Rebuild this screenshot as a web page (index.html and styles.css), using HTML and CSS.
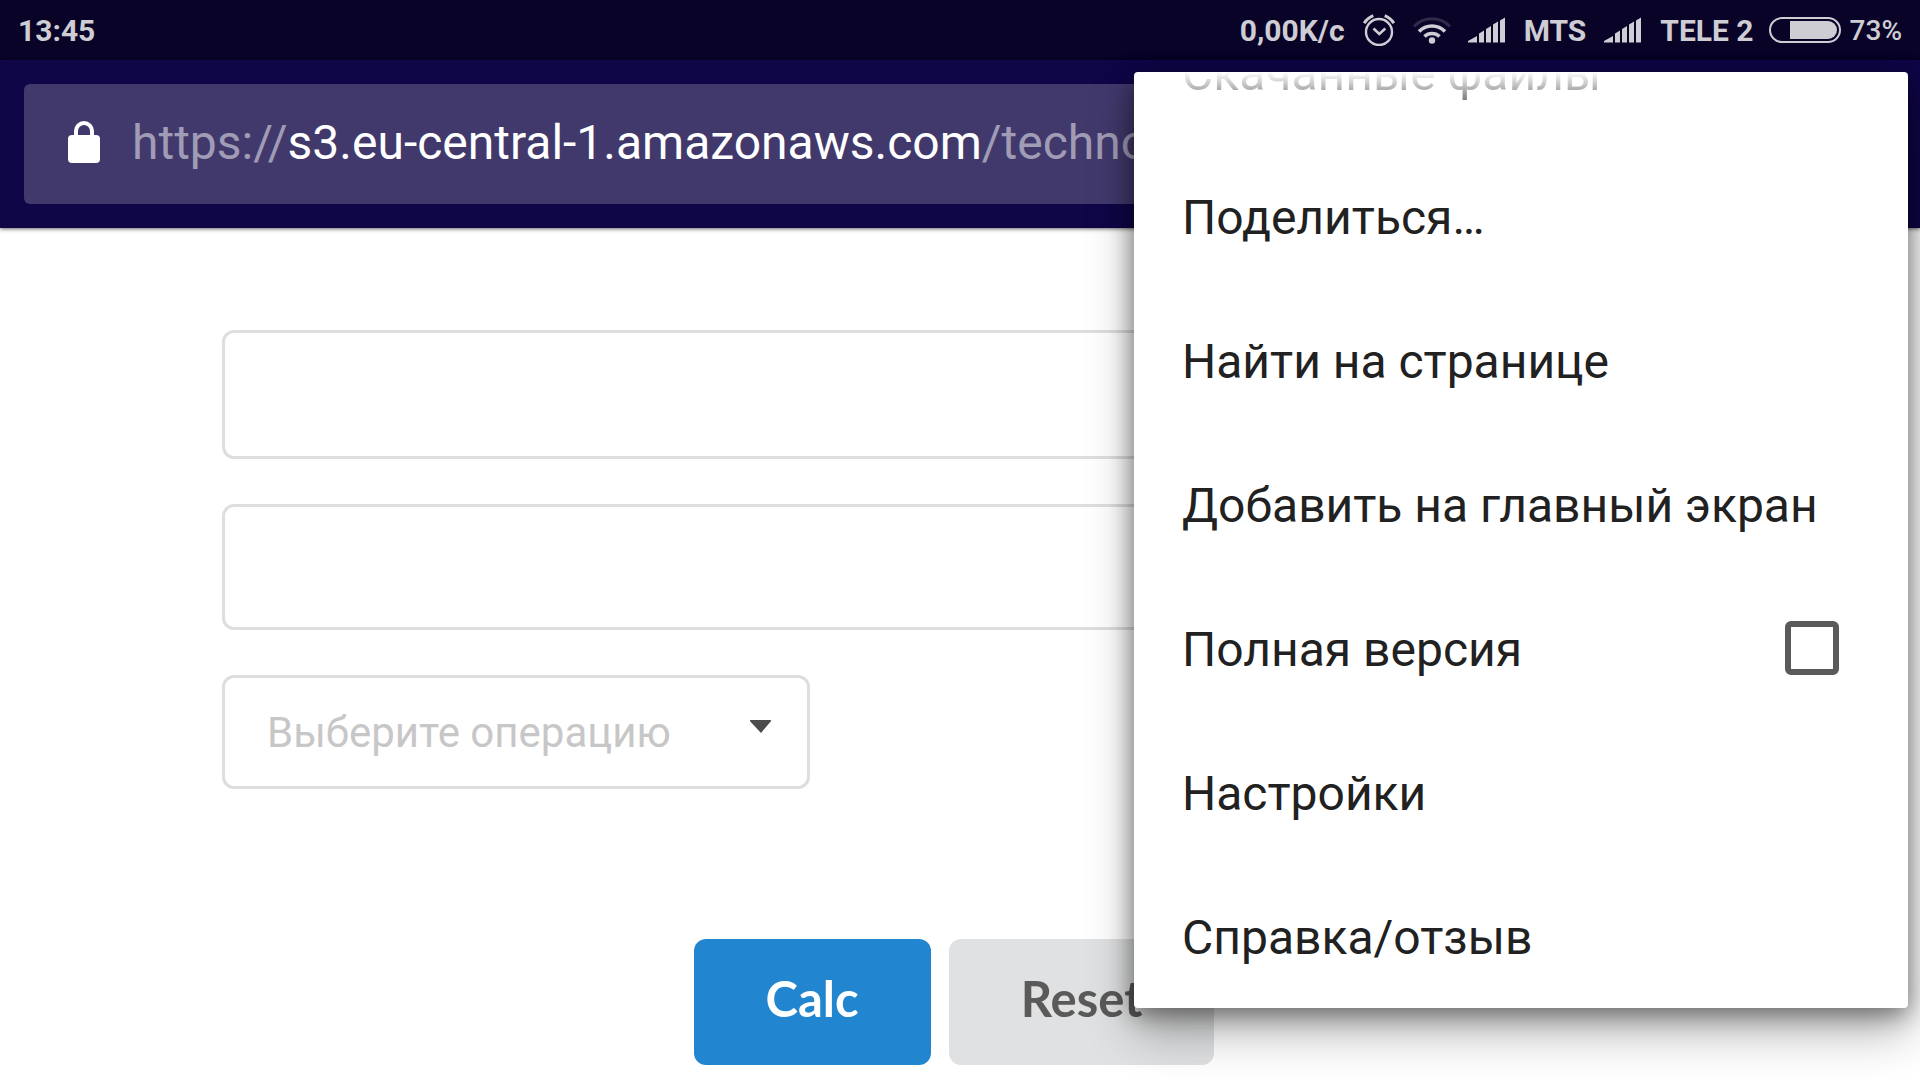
FILE: index.html
```
<!DOCTYPE html>
<html lang="ru">
<head>
<meta charset="utf-8">
<meta name="viewport" content="width=device-width, initial-scale=1">
<title>Calc</title>
<link rel="stylesheet" href="styles.css">
</head>
<body>
<div class="screen">
  <header class="status">
    <time class="status-time">13:45</time>
    <div class="status-info">
      <span class="speed">0,00K/c</span>
      <svg class="alarm" width="32" height="32" viewBox="0 0 32 32" fill="none" stroke="currentColor" aria-hidden="true">
        <circle cx="16" cy="18" r="13" stroke-width="2.4"/>
        <path d="M10.500 14.500l5.800 5.500 6-5.500" stroke-width="2.600"/>
        <path d="M1.200 9.200Q4.500 4 10.300 1.700M30.800 9.200Q27.500 4 21.700 1.700" stroke-width="3"/>
      </svg>
      <svg class="wifi" width="38" height="28" viewBox="0 0 38 28" fill="none" stroke="currentColor" aria-hidden="true">
        <path d="M1 10.500a25 25 0 0 1 36 0" stroke-width="3" opacity=".2"/>
        <path d="M6 15.500a18 18 0 0 1 26 0" stroke-width="3.600"/>
        <path d="M11.500 20.500a11 11 0 0 1 15 0" stroke-width="3.600"/>
        <circle cx="19" cy="24.500" r="3.200" fill="currentColor" stroke="none"/>
      </svg>
      <svg class="signal" width="38" height="26" viewBox="0 0 38 26" fill="currentColor" aria-hidden="true">
        <path d="M0 25.500v-1.500L9 19v6.500zM11 25.500V16.500l5-3v12zM18 25.500V12l5-3v16.500zM25 25.500V7.500l5-3v21zM32 25.500V3.500L37 .5v25z"/>
      </svg>
      <span class="carrier">MTS</span>
      <svg class="signal" width="38" height="26" viewBox="0 0 38 26" fill="currentColor" aria-hidden="true">
        <path d="M0 25.500v-1.500L9 19v6.500zM11 25.500V16.500l5-3v12zM18 25.500V12l5-3v16.500zM25 25.500V7.500l5-3v21zM32 25.500V3.500L37 .5v25z"/>
      </svg>
      <span class="carrier carrier-last">TELE 2</span>
      <svg class="battery" width="72" height="26" viewBox="0 0 72 26" aria-hidden="true">
        <rect x="1" y="1" width="70" height="24" rx="12" fill="none" stroke="currentColor" stroke-width="2"/>
        <path d="M21 4h38a9 9 0 0 1 0 18H21z" fill="currentColor"/>
      </svg>
      <span class="percent">73%</span>
    </div>
  </header>
  <div class="toolbar">
    <div class="address">
      <svg class="lock" width="32" height="42" viewBox="0 0 32 42" aria-hidden="true">
        <rect y="14" width="32" height="28" rx="4" fill="#fff"/>
        <path d="M8 15v-5a8 8 0 0 1 16 0v5" fill="none" stroke="#fff" stroke-width="4"/>
      </svg>
      <span class="url">https://<span class="host">s3.eu-central-1.amazonaws.com</span>/techno</span>
    </div>
  </div>
  <main class="page">
    <form class="form">
      <input class="field field-first" type="text" aria-label="A">
      <input class="field" type="text" aria-label="B">
      <div class="select-box">
        <select class="select" aria-label="Выберите операцию">
          <option>Выберите операцию</option>
        </select>
        <svg class="caret" width="22" height="14" viewBox="0 0 22 14" aria-hidden="true"><path d="M1 0h19q2 0 .7 1.600L11 13 .3 1.600Q-1 0 1 0z" fill="#4c4c4c"/></svg>
      </div>
      <div class="actions">
        <button class="button primary" type="button">Calc</button>
        <button class="button" type="button">Reset</button>
      </div>
    </form>
  </main>
  <nav class="menu">
    <div class="menu-list">
      <a class="item item-cut" href="#">Скачанные файлы</a>
      <a class="item" href="#">Поделиться…</a>
      <a class="item" href="#">Найти на странице</a>
      <a class="item" href="#">Добавить на главный экран</a>
      <label class="item"><span>Полная версия</span><input class="check" type="checkbox"></label>
      <a class="item" href="#">Настройки</a>
      <a class="item" href="#">Справка/отзыв</a>
    </div>
  </nav>
</div>
</body>
</html>
```
FILE: styles.css
```
* { box-sizing: border-box; }

body {
  margin: 0;
  background: #fff;
  font-family: Roboto, "Noto Sans", sans-serif;
}

.screen {
  position: relative;
  min-height: 100vh;
  overflow: hidden;
}

.status {
  display: flex;
  justify-content: space-between;
  align-items: center;
  height: 60px;
  padding: 0 18px;
  background: #080327;
  color: #cecdd4;
  font-size: 30px;
  font-weight: 700;
}

.status-info { display: flex; align-items: center; }
.speed,
.alarm,
.wifi,
.signal,
.carrier { margin-right: 18px; }
.wifi { margin-right: 17px; }
.carrier-last { margin-right: 15px; }
.battery { margin-right: 9px; }
.percent { font-size: 28px; font-weight: 500; }

.toolbar {
  padding: 24px;
  background: #0e0647;
  box-shadow: 0 1px 4px rgba(0, 0, 0, .6);
}

.address {
  display: flex;
  align-items: center;
  gap: 32px;
  height: 120px;
  padding: 0 44px 4px;
  border-radius: 6px;
  background: #41396c;
}

.lock { flex: none; }
.url { color: #a09cb5; font-size: 48px; white-space: nowrap; }
.host { color: #fff; }

.page { padding: 102px 222px 12px; }
.form { display: flex; flex-direction: column; }

.field,
.select {
  width: 100%;
  border: 3px solid #dedede;
  border-radius: 12px;
  background: #fff;
  font: 42px Roboto, "Noto Sans", sans-serif;
}

.field { height: 126px; margin-bottom: 45px; padding: 0 42px; }
.field-first { height: 129px; }

.select-box { position: relative; width: 588px; }

.select {
  display: block;
  height: 114px;
  padding: 0 42px;
  appearance: none;
  color: #c7c7c7;
}

.caret { position: absolute; right: 38px; top: 45px; }

.actions {
  display: flex;
  justify-content: center;
  gap: 18px;
  margin-top: 150px;
  padding-right: 12px;
}

.button {
  height: 126px;
  padding: 0 72px 8px;
  border: 0;
  border-radius: 12px;
  background: #e0e1e2;
  color: #5a5a5a;
  font: 700 49px Lato, sans-serif;
}

.primary { background: #2185d0; color: #fff; }

.menu {
  position: absolute;
  top: 72px;
  right: 12px;
  width: 774px;
  height: 936px;
  overflow: hidden;
  border-radius: 4px;
  background: #fff;
  box-shadow: 0 24px 48px rgba(0, 0, 0, .3), 0 6px 24px rgba(0, 0, 0, .45);
}

.menu-list { margin-top: -72px; }

.item {
  display: flex;
  justify-content: space-between;
  align-items: center;
  height: 144px;
  padding: 2px 69px 0 48px;
  color: #212121;
  font-size: 48px;
  text-decoration: none;
  white-space: nowrap;
}

.item-cut {
  background: linear-gradient(#fff 72px, #212121 120px);
  background-clip: text;
  color: transparent;
}

.check {
  width: 54px;
  height: 54px;
  margin: 0 0 2px;
  appearance: none;
  border: 6px solid #5a5a5a;
  border-radius: 6px;
}
```
